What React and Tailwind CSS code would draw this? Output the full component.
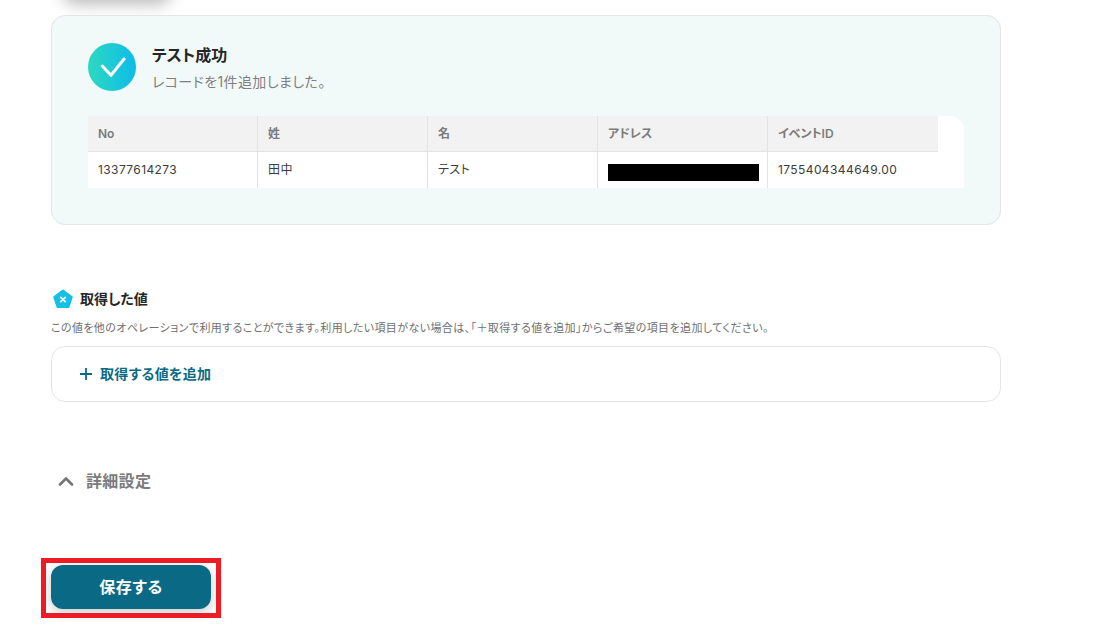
const FONT = "font-['Inter','Noto_Sans_CJK_JP',sans-serif] [font-feature-settings:'palt']";

const columns = [
  { label: "No", value: "13377614273" },
  { label: "姓", value: "田中" },
  { label: "名", value: "テスト" },
  { label: "アドレス", hidden: true },
  { label: "イベントID", value: "1755404344649.00" },
];

function SuccessIcon() {
  return (
    <div className="flex h-12 w-12 shrink-0 items-center justify-center rounded-full bg-gradient-to-r from-[#2dd9bf] to-[#0fbbe8]">
      <svg width="28" height="24" viewBox="0 0 28 24" fill="none">
        <path d="M4.3 11 L13 20.3 L26 4" stroke="#fff" strokeWidth="3" strokeLinecap="round" strokeLinejoin="round" />
      </svg>
    </div>
  );
}

function ResultTable() {
  return (
    <div className="mt-[25px] flex w-[876px] overflow-hidden rounded-tr-[14px] bg-white">
      {columns.map((col) => (
        <div key={col.label} className="w-[170px] shrink-0 border-r border-[#e3e3e3] last:border-r-0">
          <div className="flex h-9 items-center border-b border-[#e3e3e3] bg-[#f2f2f2] px-[10px] text-[12px] font-semibold leading-none text-[#7b7b7b]">
            {col.label}
          </div>
          <div className="flex h-9 items-center px-[10px] text-[12px] leading-none tracking-[0.4px] text-[#3c3c3c]">
            {col.hidden ? <div className="mt-1 h-[17px] w-[151px] shrink-0 bg-black" /> : col.value}
          </div>
        </div>
      ))}
    </div>
  );
}

function PentagonIcon() {
  return (
    <svg width="22" height="22" viewBox="0 0 22 22" className="shrink-0">
      <path d="M11 2.6 L19.8 9 L16.5 19 L5.5 19 L2.2 9 Z" fill="#15bfe6" stroke="#15bfe6" strokeWidth="2" strokeLinejoin="round" />
      <path d="M8.8 9.4 L13.2 13.6 M13.2 9.4 L8.8 13.6" stroke="#fff" strokeWidth="1.8" strokeLinecap="round" />
    </svg>
  );
}

export default function App() {
  return (
    <div className={`${FONT} h-[627px] w-[1103px] overflow-hidden bg-white px-[51px]`}>
      {/* shadow from the element scrolled out above */}
      <div className="-mt-[30px] ml-[12px] h-[30px] w-[108px] rounded-xl bg-white shadow-[0_4px_16px_rgba(0,0,0,0.28)]" />

      <section className="mt-[15px] h-[210px] w-[950px] rounded-[14px] border border-[#e2e6e6] bg-[#f2faf9] pl-9 pt-[27px]">
        <div className="flex items-start gap-4">
          <SuccessIcon />
          <div className="h-12 pt-px">
            <h2 className="text-[16px] font-semibold leading-[22px] text-[#262626]">テスト成功</h2>
            <p className="mt-[6px] text-[14px] leading-[20px] tracking-[0.4px] text-[#7f7f7f]">レコードを1件追加しました。</p>
          </div>
        </div>
        <ResultTable />
      </section>

      <div className="mt-[63px] flex h-[22px] items-center gap-[6px] pl-[1px]">
        <PentagonIcon />
        <h3 className="text-[14px] font-semibold leading-none text-[#262626]">取得した値</h3>
      </div>
      <p className="mt-[11px] text-[11px] leading-[14px] tracking-[0.4px] text-[#6f6f6f]">
        この値を他のオペレーションで利用することができます。利用したい項目がない場合は、「＋取得する値を追加」からご希望の項目を追加してください。
      </p>

      <button className="mt-[11px] flex h-14 w-[950px] items-center gap-[7px] rounded-[14px] border border-[#e2e6e6] bg-white pl-[27px]">
        <svg width="14" height="14" viewBox="0 0 14 14" fill="none">
          <path d="M7 1 V13 M1 7 H13" stroke="#0b6a84" strokeWidth="1.8" />
        </svg>
        <span className="text-[14px] font-semibold leading-none tracking-[0.3px] text-[#0b6a84]">取得する値を追加</span>
      </button>

      <div className="mt-[67px] flex h-6 items-center gap-[12px] pl-[7px]">
        <svg width="16" height="10" viewBox="0 0 16 10" fill="none">
          <path d="M2 8.5 L8 2.5 L14 8.5" stroke="#757575" strokeWidth="2.6" strokeLinecap="round" strokeLinejoin="round" />
        </svg>
        <span className="text-[16px] font-semibold leading-none tracking-[0.3px] text-[#7b7b7b]">詳細設定</span>
      </div>

      <div className="relative mt-[72px] w-40">
        <button className="flex h-11 w-40 items-center justify-center rounded-xl bg-[#0a6a85] text-[16px] font-bold tracking-[0.6px] text-white shadow-[0_3px_12px_rgba(0,0,0,0.22)]">
          保存する
        </button>
        {/* red annotation frame */}
        <div className="absolute -left-[10px] -right-[10px] -top-[7px] -bottom-[9px] border-[5px] border-[#ed1c24]" />
      </div>
    </div>
  );
}
